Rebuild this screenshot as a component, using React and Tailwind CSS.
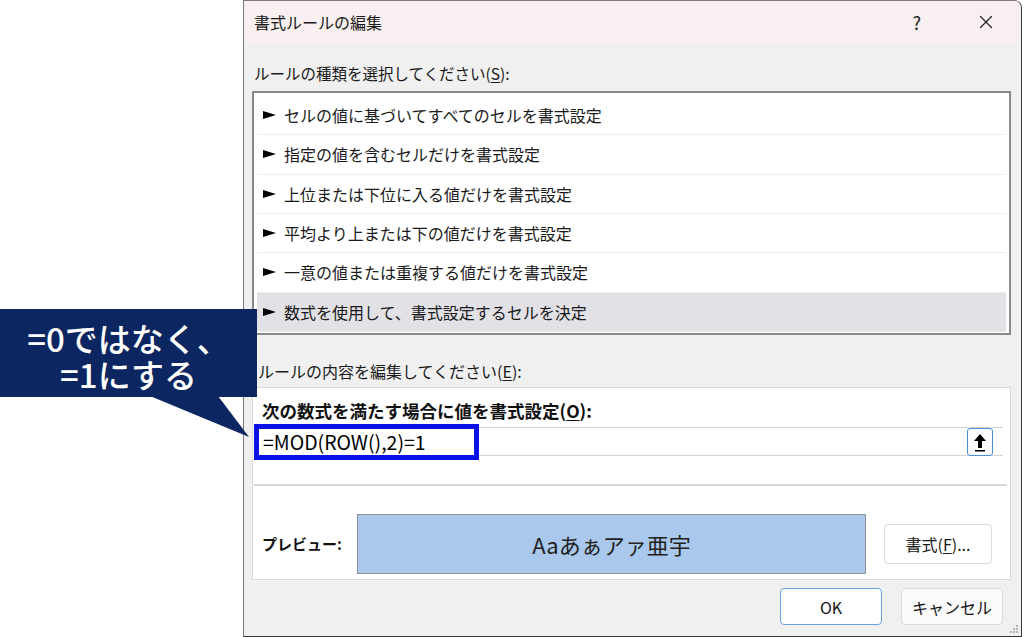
import { X } from "lucide-react";

const rules = [
  "セルの値に基づいてすべてのセルを書式設定",
  "指定の値を含むセルだけを書式設定",
  "上位または下位に入る値だけを書式設定",
  "平均より上または下の値だけを書式設定",
  "一意の値または重複する値だけを書式設定",
  "数式を使用して、書式設定するセルを決定",
];

const font = { fontFamily: '"Noto Sans CJK JP", "Noto Sans", sans-serif' };

function Key({ k }) {
  return (
    <>
      (<span className="underline underline-offset-2">{k}</span>)
    </>
  );
}

function RuleRow({ text, selected }) {
  return (
    <div
      className={`flex-1 flex items-center pl-[6px] border-b border-[#ededed] ${
        selected ? "bg-[#e1e1e6]" : ""
      }`}
    >
      <svg width="13" height="10" viewBox="0 0 13 10" className="mr-[8px]">
        <polygon points="0,1 13,5 0,9" fill="#000" />
      </svg>
      <span className="text-[16px] text-[#1a1a1a]">{text}</span>
    </div>
  );
}

export default function App() {
  return (
    <div className="relative w-[1024px] h-[637px] bg-white overflow-hidden" style={font}>
      {/* dialog window */}
      <div className="relative ml-[243px] w-[779px] h-[637px] border border-[#7a7a7a] border-r-[#3a3a3a] border-b-[#3a3a3a] rounded-tr-[8px] flex flex-col overflow-hidden">
        {/* title bar */}
        <div className="h-[42px] shrink-0 bg-[#f7eff0] flex items-center pl-[10px] pr-[24px]">
          <span className="text-[16px] text-[#1a1a1a]">書式ルールの編集</span>
          <span className="ml-auto mr-[54px] text-[18px] text-[#222]">?</span>
          <X size={22} strokeWidth={1.3} className="text-[#222]" />
        </div>

        {/* body */}
        <div className="flex-1 bg-[#f0f0f0] px-[8px] flex flex-col">
          <div className="mt-[20px] h-[22px] pl-[2px] flex items-center text-[15.5px] text-[#1a1a1a]">
            ルールの種類を選択してください<Key k="S" />:
          </div>

          {/* rule type list */}
          <div className="mt-[6px] h-[244px] border-2 border-[#8a8a8a] bg-white flex flex-col pt-[3px] pb-[1px] px-[3px] w-[759px]">
            {rules.map((r, i) => (
              <RuleRow key={r} text={r} selected={i === rules.length - 1} />
            ))}
          </div>

          <div className="mt-[25px] h-[22px] pl-[6px] flex items-center text-[16px] text-[#1a1a1a]">
            ルールの内容を編集してください<Key k="E" />:
          </div>

          {/* rule description panel */}
          <div className="mt-[5px] w-[759px] h-[193px] bg-white border border-[#d9d9d9] flex flex-col px-[1px]">
            <div className="mt-[12px] h-[22px] pl-[8px] flex items-center text-[17.5px] font-bold text-[#111]">
              次の数式を満たす場合に値を書式設定<Key k="O" />:
            </div>
            <div className="mt-[5px] w-[749px] h-[29px] border-y border-[#d4d4d4] flex items-center pl-[9px] pr-[10px]">
              <span className="text-[19.5px] text-black">=MOD(ROW(),2)=1</span>
              <div className="ml-auto w-[26px] h-[28px] border border-[#4a90d9] rounded-[3px] flex items-center justify-center bg-white">
                <svg width="16" height="20" viewBox="0 0 16 20">
                  <path d="M8 2 L14 9 L10 9 L10 16 L6 16 L6 9 L2 9 Z" fill="#000" />
                  <rect x="3" y="18" width="10" height="1.5" fill="#000" />
                </svg>
              </div>
            </div>
            <div className="mt-[28px] w-[753px] h-[2px] bg-[#d6d6d6]" />
            <div className="mt-[28px] flex items-center">
              <div className="pl-[8px] w-[103px] whitespace-nowrap text-[15px] font-bold text-[#111]">
                プレビュー:
              </div>
              <div className="w-[509px] h-[60px] bg-[#a9c8eb] border border-[#8f8f8f] flex items-center justify-center text-[22px] text-[#222]">
                Aaあぁアァ亜宇
              </div>
              <div className="ml-[18px] w-[108px] h-[40px] bg-white border border-[#dcdcdc] rounded-[4px] flex items-center justify-center text-[16px] text-[#1a1a1a]">
                書式<Key k="F" />...
              </div>
            </div>
          </div>

          {/* dialog buttons */}
          <div className="mt-[8px] flex justify-end gap-[19px] pr-[10px]">
            <div className="w-[102px] h-[37px] bg-white border border-[#6aa3e0] rounded-[4px] flex items-center justify-center text-[16px] text-[#111]">
              OK
            </div>
            <div className="w-[102px] h-[37px] bg-[#fbfbfb] border border-[#dadada] rounded-[4px] flex items-center justify-center text-[16px] text-[#111]">
              キャンセル
            </div>
          </div>
        </div>

        {/* size grip */}
        <svg className="absolute right-[2px] bottom-[2px]" width="10" height="10" viewBox="0 0 10 10">
          <rect x="7" y="1" width="2" height="2" fill="#b5b5b5" />
          <rect x="4" y="4" width="2" height="2" fill="#b5b5b5" />
          <rect x="7" y="4" width="2" height="2" fill="#b5b5b5" />
          <rect x="1" y="7" width="2" height="2" fill="#b5b5b5" />
          <rect x="4" y="7" width="2" height="2" fill="#b5b5b5" />
          <rect x="7" y="7" width="2" height="2" fill="#b5b5b5" />
        </svg>
      </div>

      {/* formula highlight frame */}
      <div className="absolute left-[254px] top-[424px] w-[225px] h-[36px] border-[5px] border-[#0a10e8]" />

      {/* callout */}
      <svg className="absolute left-0 top-0" width="260" height="440" viewBox="0 0 260 440">
        <polygon points="150,396 218,396 249,437" fill="#0b2660" />
      </svg>
      <div className="absolute left-0 top-[309px] w-[257px] h-[88px] pt-[5px] bg-[#0b2660] flex flex-col items-center justify-center text-white text-[33px] font-medium leading-[36px]">
        <span>=0ではなく、</span>
        <span>=1にする</span>
      </div>
    </div>
  );
}
